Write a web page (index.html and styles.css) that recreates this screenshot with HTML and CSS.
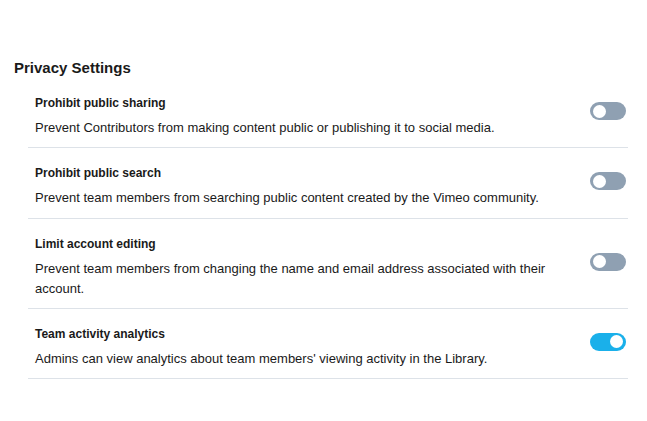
FILE: index.html
```html
<!DOCTYPE html>
<html lang="en">
<head>
<meta charset="utf-8">
<title>Privacy Settings</title>
<link rel="stylesheet" href="styles.css">
</head>
<body>
<main class="page">
  <h2 class="heading">Privacy Settings</h2>
  <ul class="settings">
    <li class="setting">
      <div class="text">
        <div class="title">Prohibit public sharing</div>
        <div class="desc">Prevent Contributors from making content public or publishing it to social media.</div>
      </div>
      <span class="toggle"><span class="knob"></span></span>
    </li>
    <li class="setting">
      <div class="text">
        <div class="title">Prohibit public search</div>
        <div class="desc">Prevent team members from searching public content created by the Vimeo community.</div>
      </div>
      <span class="toggle"><span class="knob"></span></span>
    </li>
    <li class="setting">
      <div class="text">
        <div class="title">Limit account editing</div>
        <div class="desc">Prevent team members from changing the name and email address associated with their account.</div>
      </div>
      <span class="toggle"><span class="knob"></span></span>
    </li>
    <li class="setting">
      <div class="text">
        <div class="title">Team activity analytics</div>
        <div class="desc">Admins can view analytics about team members' viewing activity in the Library.</div>
      </div>
      <span class="toggle on"><span class="knob"></span></span>
    </li>
  </ul>
</main>
</body>
</html>
```
FILE: styles.css
```css
* { box-sizing: border-box; }
html, body { margin: 0; padding: 0; background: #fff; }
body {
  font-family: "Liberation Sans", Arial, sans-serif;
  color: #1a1a1a;
}
.page {
  padding: 58px 19px 0 14px;
}
.heading {
  margin: 0;
  font-size: 15px;
  line-height: 20px;
  font-weight: bold;
}
.settings {
  list-style: none;
  margin: 0 0 0 14px;
  padding: 0;
}
.setting {
  display: flex;
  align-items: center;
  justify-content: space-between;
  padding: 16px 2px 9.3px 7px;
  border-bottom: 1px solid #dde2e8;
}
.text { max-width: 540px; }
.title {
  font-size: 12px;
  line-height: 18px;
  font-weight: bold;
  margin-bottom: 6px;
}
.desc {
  font-size: 13px;
  line-height: 20px;
}
.toggle {
  flex: none;
  width: 36px;
  height: 18px;
  margin-bottom: 10px;
  border-radius: 9px;
  background: #8fa0b2;
  display: flex;
  align-items: center;
  padding: 0 3px;
}
.knob {
  width: 13px;
  height: 13px;
  border-radius: 50%;
  background: #fff;
}
.toggle.on {
  background: #1ab0ea;
  justify-content: flex-end;
}
```
